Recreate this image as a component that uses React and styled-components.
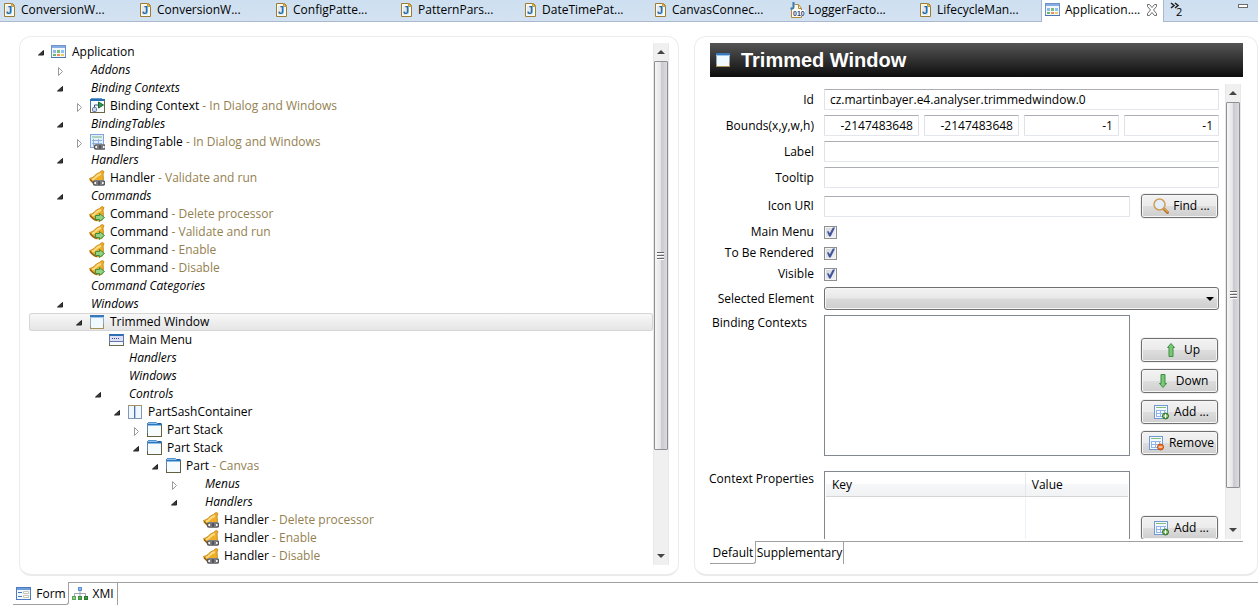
import React from 'react';
import styled, { createGlobalStyle, css } from 'styled-components';

const GlobalStyle = createGlobalStyle`
  *, *::before, *::after { box-sizing: border-box; }
  body {
    margin: 0;
    background: #fff;
    color: #000;
    font-family: "Open Sans", "Noto Sans", sans-serif;
    font-size: 12px;
    line-height: 16px;
  }
  button, input, select { font: inherit; color: inherit; margin: 0; }
`;

/* ---------- icons ---------- */

const Glyph = styled.svg.attrs((p) => ({ viewBox: p.viewBox || '0 0 16 16', 'aria-hidden': true }))`
  display: block;
  flex: none;
  width: 16px;
  height: 16px;
`;

const GlyphLetter = styled.text`
  font-family: "Liberation Sans", sans-serif;
  font-weight: bold;
  font-size: ${(p) => (p.$small ? 7 : 11)}px;
  fill: ${(p) => (p.$small ? '#26406f' : '#2468a4')};
`;

const JavaIcon = () => (
  <Glyph>
    <path d="M2.500 1.500h8l2 2v11h-10z" fill="#fdf9ec" stroke="#9c7d35" />
    <path d="M9.500 1.500v3h3z" fill="#f1c45a" stroke="#c59a3c" />
    <rect x="4" y="4" width="6" height="9" fill="#dcebf7" />
    <GlyphLetter x="4" y="12">J</GlyphLetter>
  </Glyph>
);

const ClassIcon = () => (
  <Glyph>
    <path d="M2.500 5.500v10h10v-9l-3-4h-4" fill="#fdf9ec" stroke="#b08a3c" />
    <path d="M9.500 3v3.500h3" fill="none" stroke="#b08a3c" />
    <path d="M4.500 0v5q0 2-3 1.500" fill="none" stroke="#3b78b0" strokeWidth="2" />
    <rect x="3" y="8" width="13" height="6" fill="#fff" />
    <GlyphLetter $small x="4" y="14">010</GlyphLetter>
  </Glyph>
);

const AppIcon = () => (
  <Glyph>
    <rect x="0.500" y="1.500" width="14" height="12" fill="#f3f8fe" stroke="#6f91c6" />
    <rect x="1" y="2" width="13" height="2" fill="#86aee2" />
    <path d="M0 13.500h15" stroke="#4e74ad" />
    <path d="M2 6h3v3H2z" fill="#8dbbe8" />
    <path d="M6 6h3v3H6z" fill="#7cbb78" />
    <path d="M10 6h3v3h-3z" fill="#8fc3ef" />
    <path d="M2 10h3v2H2z" fill="#6fb56d" />
    <path d="M6 10h3v2H6z" fill="#ee8d55" />
    <path d="M10 10h3v2h-3z" fill="#efce5c" />
  </Glyph>
);

const ContextIcon = () => (
  <Glyph viewBox="-1 0 16 16">
    <rect x="0.500" y="1.500" width="14" height="13" fill="#f7fbfe" stroke="#6b6546" />
    <path d="M1 0.500h11" stroke="#5b9bd4" />
    <path d="M0 2h15" stroke="#2870b2" strokeWidth="2" />
    <path d="M0.500 3v6" stroke="#3c78b4" />
    <path d="M8.500 4l5 3-5 3z" fill="#2f9a50" stroke="#176a38" />
    <path d="M4.500 9v-2h4" fill="none" stroke="#3a4d80" />
    <rect x="2.500" y="9.500" width="4" height="4" rx="1" fill="#c9d5ec" stroke="#6478a4" />
  </Glyph>
);

const Chain = () => (
  <g fill="none">
    <rect x="4" y="10" width="12" height="6" rx="3" fill="#f4f4f4" />
    <g stroke="#54565b" strokeWidth="1.500">
      <rect x="4.500" y="11" width="6" height="4" rx="1.500" />
      <rect x="9.500" y="11" width="6" height="4" rx="1.500" />
      <path d="M7 13h6" />
    </g>
  </g>
);

const BindingTableIcon = () => (
  <Glyph viewBox="-1 0 16 16">
    <rect x="0.500" y="0.500" width="13" height="13" fill="#e4effc" stroke="#7fa5da" />
    <path d="M2 3h10" stroke="#79b877" />
    <path d="M2 6.500h10M2 9.500h10M3.500 5v7M8.500 5v7" stroke="#8db0df" />
    <Chain />
  </Glyph>
);

const Bell = () => (
  <g>
    <path
      d="M10.500 2.500L13 0.500 15 1.500 14 4Q15 9 13.500 14 10 15.500 6 14.500 2 12.500 0.500 8.500 3 8 5 6.500 7 3.500 10.500 2.500z"
      fill="#efad28"
      stroke="#cd8f22"
    />
    <path d="M12 4Q9 4.500 7 7 5 9.500 3 9.500" fill="none" stroke="#fbdc82" strokeWidth="2" />
    <path d="M1 9.500q3 4 7 5" fill="none" stroke="#996312" strokeWidth="1.500" />
  </g>
);

const HandlerIcon = () => (
  <Glyph>
    <Bell />
    <Chain />
  </Glyph>
);

const CommandIcon = () => (
  <Glyph>
    <Bell />
    <path d="M6.500 9.500h4v-2l5 4-5 4v-2h-4z" fill="#93d184" stroke="#3c9140" />
  </Glyph>
);

const WindowIcon = () => (
  <Glyph>
    <rect x="1.500" y="1.500" width="13" height="13" fill="#f0f9fe" stroke="#a5905c" />
    <path d="M1 2h14" stroke="#3a78ba" strokeWidth="2" />
    <path d="M1 3.500h14" stroke="#9cc6ea" />
    <path d="M1.500 4v8M14.500 4v6" stroke="#8fa9bd" />
  </Glyph>
);

const MenuIcon = () => (
  <Glyph viewBox="-1 0 16 16">
    <rect x="0.500" y="2.500" width="14" height="11" fill="#f5fafe" stroke="#6c6a4c" />
    <rect x="0" y="2" width="15" height="2" fill="#2f6fb3" />
    <rect x="1" y="4" width="13" height="5" fill="#dcdff5" />
    <path d="M0.500 3v8M14.500 3v8M1 9.500h13" stroke="#6478a8" />
    <path d="M3 6.500h8" stroke="#344c86" strokeDasharray="1 1" />
  </Glyph>
);

const SashIcon = () => (
  <Glyph>
    <rect x="1.500" y="1.500" width="13" height="13" fill="#f0f7fe" stroke="#8497b5" />
    <path d="M1 1.500h14" stroke="#a8925c" />
    <path d="M7.500 2v12" stroke="#4f71ad" />
    <path d="M8.500 2v12" stroke="#b6cbe8" />
  </Glyph>
);

const StackIcon = () => (
  <Glyph viewBox="-1 0 16 16">
    <rect x="0.500" y="2.500" width="14" height="12" fill="#f6fbfe" stroke="#655f41" />
    <path d="M1 0.500h8" stroke="#4f93cf" />
    <path d="M0 1.500h10" stroke="#8cc0ea" />
    <path d="M9.500 0.500l1 1h4" fill="none" stroke="#1f5c9c" />
    <path d="M0 2.500h15" stroke="#2c74bb" />
    <path d="M1 3.500h13" stroke="#8cc0ea" />
    <path d="M0.500 1v10" stroke="#5a83ad" />
  </Glyph>
);

const SearchIcon = () => (
  <Glyph>
    <path d="M10.500 10.500l4 4" stroke="#b9742c" strokeWidth="3" strokeLinecap="round" />
    <path d="M11 10.500l3.500 3.500" stroke="#f3c76a" strokeLinecap="round" />
    <circle cx="6.500" cy="6.500" r="5.500" fill="#e4eef9" stroke="#d0a05a" strokeWidth="1.500" />
  </Glyph>
);

const UpIcon = () => (
  <Glyph>
    <path d="M6 14.500v-9H4.500L8 1.500l3.500 4H10v9z" fill="#7cc777" stroke="#3d8f43" />
  </Glyph>
);

const DownIcon = () => (
  <Glyph>
    <path d="M6 1.500v9H4.500L8 14.500l3.500-4H10v-9z" fill="#7cc777" stroke="#3d8f43" />
  </Glyph>
);

const TableBase = () => (
  <g>
    <rect x="0.500" y="1.500" width="13" height="13" fill="#f4f9ff" stroke="#7099d4" />
    <path d="M2 3.500h10" stroke="#84bd78" />
    <path d="M2 6.500h10M2 9.500h10M2 12.500h10M2.500 6v7M6.500 6v7M10.500 6v7" stroke="#93b4e2" />
  </g>
);

const AddIcon = () => (
  <Glyph>
    <TableBase />
    <circle cx="11.500" cy="12" r="3" fill="#5fa548" stroke="#34762a" />
    <path d="M9.500 12h4M11.500 10v4" stroke="#fff" />
  </Glyph>
);

const RemoveIcon = () => (
  <Glyph>
    <TableBase />
    <circle cx="11.500" cy="12" r="3" fill="#ee7128" stroke="#c4500f" />
    <path d="M9.500 12h4" stroke="#fff" />
  </Glyph>
);

const FormIcon = () => (
  <Glyph>
    <rect x="0.500" y="1.500" width="14" height="12" fill="#f3f8fe" stroke="#4c7cbf" />
    <rect x="1" y="2" width="13" height="2" fill="#6d9cdb" />
    <path d="M2 6.500h4M2 10.500h4" stroke="#4a78b5" />
    <path d="M7.500 5.500h5v2h-5zM7.500 9.500h5v2h-5z" fill="#fff" stroke="#c9c5b2" />
  </Glyph>
);

const TreeIcon = () => (
  <Glyph>
    <path d="M8 5v3M2.500 10V7.500h11V10M8 8v2" fill="none" stroke="#9aa3b0" />
    <rect x="6.500" y="1.500" width="3" height="3" fill="#8ab6ee" stroke="#5d91d6" />
    <rect x="0.500" y="10.500" width="3" height="3" fill="#8ccf7c" stroke="#56a656" />
    <rect x="6.500" y="10.500" width="3" height="3" fill="#5fb055" stroke="#3b8f3f" />
    <rect x="12.500" y="10.500" width="3" height="3" fill="#3f9a43" stroke="#257a2e" />
  </Glyph>
);

const CloseIcon = () => (
  <Glyph>
    <path
      d="M2.500 2.500h2l2.500 3 2.500-3h2v2l-3 3.500 3 3.500v2h-2l-2.500-3-2.500 3h-2v-2l3-3.500-3-3.500z"
      fill="#fff"
      stroke="#6b6b6b"
    />
  </Glyph>
);

const ChevronIcon = () => (
  <Glyph>
    <path d="M3 3l3 2.500L3 8M7 3l3 2.500L7 8" fill="none" stroke="#1d1d1d" strokeWidth="1.500" />
  </Glyph>
);

const MinimizeIcon = () => (
  <Glyph>
    <rect x="3.500" y="4.500" width="9" height="3" fill="#fff" stroke="#6b6b6b" />
  </Glyph>
);

const TwistieIcon = ({ open }) => (
  <Glyph>
    {open ? (
      <path d="M11.500 6.500v4.500h-5z" fill="#3c3c3c" stroke="#222" />
    ) : (
      <path d="M7.500 5.500l4 4-4 4z" fill="#fff" stroke="#9a9a9a" />
    )}
  </Glyph>
);

/* ---------- editor tabs ---------- */

const TabBar = styled.nav`
  display: flex;
  height: 22px;
  overflow: hidden;
  background: linear-gradient(#cddff0, #d4e2f1);
`;

const EditorTab = styled.button`
  display: flex;
  align-items: center;
  gap: 3px;
  flex: 0 0 ${(p) => p.$width}px;
  height: 22px;
  padding: 0 2px 1px;
  border: 0;
  border-bottom: 1px solid #a9b8cf;
  background: none;
  white-space: nowrap;
  ${(p) =>
    p.$active &&
    css`
      gap: 4px;
      padding: 0 2px 2px 3px;
      border: 1px solid #a9b8cf;
      border-width: 0 1px;
      background: #fff;
    `}
`;

const TabText = styled.span`
  flex: 1;
  text-align: left;
`;

const TabBarRest = styled.div`
  display: flex;
  flex: 1;
  justify-content: space-between;
  padding: 0 7px 0 4px;
  border-bottom: 1px solid #a9b8cf;
`;

const BarButton = styled.button`
  display: flex;
  align-items: center;
  height: 16px;
  padding: 0;
  border: 0;
  background: none;
`;

const HiddenCount = styled.span`
  margin-left: -8px;
  padding-top: 8px;
  font-size: 11px;
`;

/* ---------- scroll bar ---------- */

const ScrollTrack = styled.div`
  display: flex;
  flex-direction: column;
  flex: 0 0 16px;
  border: 1px solid #e8e8e8;
  border-width: 0 1px;
  background: #f0f0f0;
`;

const ScrollButton = styled.button`
  display: flex;
  align-items: center;
  justify-content: center;
  flex: 0 0 18px;
  padding: 0;
  border: 0;
  background: none;

  &::before {
    content: "";
    border: 4px solid transparent;
    border-top-width: ${(p) => (p.$down ? 4 : 0)}px;
    border-bottom-width: ${(p) => (p.$down ? 0 : 4)}px;
    border-top-color: #444;
    border-bottom-color: #444;
  }
`;

const ScrollThumb = styled.div`
  display: flex;
  align-items: center;
  justify-content: center;
  flex: ${(p) => p.$share} 1 0;
  border: 1px solid #8f8f93;
  border-radius: 1px;
  background: linear-gradient(90deg, #f6f6f6, #e6e6e8 45%, #c9c9cf 55%, #dcdce0);

  &::before {
    content: "";
    width: 7px;
    height: 8px;
    background: repeating-linear-gradient(#66666a 0 1px, #fff 1px 2px, transparent 2px 3px);
  }
`;

const ScrollRest = styled.div`
  flex: ${(p) => p.$share} 1 0;
`;

const ScrollBar = ({ thumb }) => (
  <ScrollTrack>
    <ScrollButton aria-label="Scroll up" />
    <ScrollThumb $share={thumb} />
    <ScrollRest $share={100 - thumb} />
    <ScrollButton $down aria-label="Scroll down" />
  </ScrollTrack>
);

/* ---------- panels ---------- */

const Page = styled.div`
  display: flex;
  flex-direction: column;
  min-height: 100vh;
`;

const Workspace = styled.main`
  display: grid;
  grid-template-columns: minmax(0, 1.170fr) minmax(0, 1fr);
  gap: 15px;
  padding: 14px 0 6px 19px;
`;

const Panel = styled.section`
  display: flex;
  min-width: 0;
  border: 1px solid #ececec;
  border-bottom: 2px solid #ebebeb;
  border-radius: 12px;
  background: #fff;
`;

const TreePanel = styled(Panel)`
  padding: 6px 9px 9px;
`;

const DetailPanel = styled(Panel)`
  flex-direction: column;
  padding: 6px 14px 9px 15px;
`;

const Tree = styled.ul`
  flex: 1;
  min-width: 0;
  margin: 0;
  padding: 0;
  list-style: none;
`;

const TreeRow = styled.li`
  display: flex;
  align-items: center;
  height: 18px;
  padding-left: ${(p) => p.$level * 19 + 3}px;
  white-space: nowrap;
  ${(p) =>
    p.$selected &&
    css`
      border-radius: 3px;
      background: linear-gradient(#f9f9f9, #e4e4e4);
      box-shadow: inset 0 0 0 1px #d6d6d6;
    `}
`;

const Slot = styled.span`
  flex: 0 0 ${(p) => p.$width}px;
`;

const NodeName = styled.span`
  font-style: ${(p) => (p.$group ? 'italic' : 'normal')};
`;

const NodeDetail = styled.span`
  color: #947f50;
  white-space: pre;
`;

/* ---------- form ---------- */

const TitleBar = styled.header`
  display: flex;
  align-items: center;
  gap: 10px;
  height: 34px;
  margin-bottom: 7px;
  padding: 0 5px;
  background: linear-gradient(#555, #0d0d0d);
`;

const Title = styled.h1`
  margin: 0;
  color: #fff;
  font: bold 20px/24px "Liberation Sans", sans-serif;
`;

const FormViewport = styled.div`
  display: flex;
  flex: 1 1 0;
  gap: 6px;
  min-height: 0;
  margin: 0 2px 2px -4px;
  overflow: hidden;
`;

const FormGrid = styled.form`
  display: grid;
  flex: 1;
  grid-template-columns: 108px minmax(0, 1fr) 79px;
  column-gap: 10px;
  row-gap: 5px;
  align-content: start;
  align-items: center;
  min-width: 0;
  padding-top: 5px;
`;

const FieldLabel = styled.label`
  align-self: ${(p) => (p.$top ? 'start' : 'center')};
  justify-self: end;
  padding-right: ${(p) => (p.$inset ? 7 : 0)}px;
  white-space: nowrap;
`;

const TextField = styled.input`
  grid-column: span ${(p) => p.$span || 1};
  width: 100%;
  min-width: 0;
  height: 21px;
  padding: 0 5px;
  border: 1px solid;
  border-color: #abadb3 #e0e3ea #e3e6ec #dfe2ea;
  border-radius: 1px;
  background: #fff;
  text-align: ${(p) => (p.$number ? 'right' : 'left')};
  outline: 0;
`;

const BoundsGroup = styled.div`
  display: grid;
  grid-column: span 2;
  grid-template-columns: repeat(4, minmax(0, 1fr));
  gap: 5px;
`;

const CheckCell = styled.div`
  display: flex;
  align-items: center;
  grid-column: span 2;
  height: 16px;
`;

const CheckBox = styled.input.attrs({ type: 'checkbox' })`
  appearance: none;
  width: 13px;
  height: 13px;
  border: 1px solid #8e8f8f;
  background: linear-gradient(135deg, #cfd3da, #f4f5f7);
  box-shadow: inset 0 0 0 1px #f4f4f4;

  &:checked::before {
    content: "";
    display: block;
    width: 11px;
    height: 11px;
    background: #41549c;
    clip-path: polygon(18% 46%, 34% 44%, 44% 62%, 72% 8%, 92% 8%, 52% 92%, 38% 92%);
  }
`;

const Combo = styled.div`
  position: relative;
  grid-column: span 2;
  height: 23px;
`;

const ComboSelect = styled.select`
  display: block;
  appearance: none;
  width: 100%;
  height: 23px;
  padding: 0 20px 0 5px;
  border: 1px solid #707070;
  border-radius: 3px;
  background: linear-gradient(#f3f3f3, #e8e8e8 48%, #dadada 52%, #cdcdcd);
  box-shadow: inset 0 0 0 1px #f6f6f6;
`;

const ComboArrow = styled.span`
  position: absolute;
  top: 10px;
  right: 5px;
  border: 4px solid transparent;
  border-top-color: #000;
  border-bottom: 0;
  pointer-events: none;
`;

const PushButton = styled.button.attrs({ type: 'button' })`
  display: flex;
  align-items: center;
  justify-content: center;
  gap: ${(p) => (p.$wide ? 5 : 4)}px;
  width: 100%;
  height: 26px;
  padding: 0 0 0 4px;
  border: 1px solid #f0f0f0;
  border-radius: 4px;
  background: linear-gradient(#f3f3f3, #ebebeb 48%, #dddddd 52%, #cdcdcd);
  box-shadow: inset 0 0 0 1px #707070, inset 0 0 0 2px #f6f6f6;
  white-space: nowrap;
`;

const ButtonColumn = styled.div`
  display: flex;
  flex-direction: column;
  justify-content: flex-end;
  align-self: stretch;
  gap: 5px;
  margin-bottom: ${(p) => (p.$spaced ? 10 : 0)}px;
`;

const ListBox = styled.div`
  height: 141px;
  margin-bottom: 10px;
  border: 1px solid #828790;
`;

const TableBox = styled.div`
  height: 70px;
  border: 1px solid #828790;
  border-bottom: 0;
  padding: 1px 1px 0;
`;

const PropertyTable = styled.table`
  width: 100%;
  height: 100%;
  border-collapse: collapse;
  table-layout: fixed;
`;

const HeadCell = styled.th`
  width: ${(p) => p.$width};
  height: 23px;
  padding: 1px 6px 0;
  border-right: 1px solid #e3e8ee;
  border-bottom: 1px solid #d5d5d5;
  background: linear-gradient(#fff 45%, #f6f7f8 50%, #f1f2f4);
  font-weight: normal;
  text-align: left;
  &:last-child { border-right: 0; }
`;

const BodyCell = styled.td`
  padding: 0;
  border-right: 1px solid #edf3f8;
  &:last-child { border-right: 0; }
`;

/* ---------- bottom tab strips ---------- */

const Strip = styled.nav`
  display: flex;
  flex: none;
  height: 24px;
  padding-left: ${(p) => p.$indent || 0}px;
`;

const StripTab = styled.button`
  display: flex;
  align-items: center;
  justify-content: center;
  gap: 4px;
  flex: 0 0 ${(p) => p.$width}px;
  height: 23px;
  padding: ${(p) => (p.$active ? '1px 0 0 1px' : 0)};
  border: 0 solid #a0a0a0;
  border-width: ${(p) => (p.$active ? '0 1px 1px 0' : '1px 1px 0 0')};
  border-bottom-right-radius: ${(p) => (p.$active ? 3 : 0)}px;
  background: #fff;
  white-space: nowrap;
`;

const StripLine = styled.div`
  flex: 1;
  border-top: 1px solid #a0a0a0;
`;

/* ---------- data ---------- */

const editorTabs = [
  { text: 'ConversionW...', width: 136 },
  { text: 'ConversionW...', width: 136 },
  { text: 'ConfigPatte...', width: 125 },
  { text: 'PatternPars...', width: 124 },
  { text: 'DateTimePat...', width: 130 },
  { text: 'CanvasConnec...', width: 136 },
  { text: 'LoggerFacto...', width: 129, Icon: ClassIcon },
  { text: 'LifecycleMan...', width: 125 },
];

const nodes = [
  { level: 0, open: true, Icon: AppIcon, name: 'Application' },
  { level: 1, open: false, group: true, name: 'Addons' },
  { level: 1, open: true, group: true, name: 'Binding Contexts' },
  { level: 2, open: false, Icon: ContextIcon, name: 'Binding Context', detail: 'In Dialog and Windows' },
  { level: 1, open: true, group: true, name: 'BindingTables' },
  { level: 2, open: false, Icon: BindingTableIcon, name: 'BindingTable', detail: 'In Dialog and Windows' },
  { level: 1, open: true, group: true, name: 'Handlers' },
  { level: 2, Icon: HandlerIcon, name: 'Handler', detail: 'Validate and run' },
  { level: 1, open: true, group: true, name: 'Commands' },
  { level: 2, Icon: CommandIcon, name: 'Command', detail: 'Delete processor' },
  { level: 2, Icon: CommandIcon, name: 'Command', detail: 'Validate and run' },
  { level: 2, Icon: CommandIcon, name: 'Command', detail: 'Enable' },
  { level: 2, Icon: CommandIcon, name: 'Command', detail: 'Disable' },
  { level: 1, group: true, name: 'Command Categories' },
  { level: 1, open: true, group: true, name: 'Windows' },
  { level: 2, open: true, Icon: WindowIcon, name: 'Trimmed Window', selected: true },
  { level: 3, Icon: MenuIcon, name: 'Main Menu' },
  { level: 3, group: true, name: 'Handlers' },
  { level: 3, group: true, name: 'Windows' },
  { level: 3, open: true, group: true, name: 'Controls' },
  { level: 4, open: true, Icon: SashIcon, name: 'PartSashContainer' },
  { level: 5, open: false, Icon: StackIcon, name: 'Part Stack' },
  { level: 5, open: true, Icon: StackIcon, name: 'Part Stack' },
  { level: 6, open: true, Icon: StackIcon, name: 'Part', detail: 'Canvas' },
  { level: 7, open: false, group: true, name: 'Menus' },
  { level: 7, open: true, group: true, name: 'Handlers' },
  { level: 8, Icon: HandlerIcon, name: 'Handler', detail: 'Delete processor' },
  { level: 8, Icon: HandlerIcon, name: 'Handler', detail: 'Enable' },
  { level: 8, Icon: HandlerIcon, name: 'Handler', detail: 'Disable' },
];

const checks = [
  { id: 'main-menu', text: 'Main Menu' },
  { id: 'rendered', text: 'To Be Rendered' },
  { id: 'visible', text: 'Visible' },
];

const bounds = [
  { name: 'x', value: '-2147483648' },
  { name: 'y', value: '-2147483648' },
  { name: 'width', value: '-1' },
  { name: 'height', value: '-1' },
];

function TreeNode({ node }) {
  const { level, open, Icon, name, detail, group, selected } = node;
  return (
    <TreeRow role="treeitem" aria-level={level + 1} aria-expanded={open} aria-selected={!!selected} $level={level} $selected={selected}>
      <Slot $width={19}>{open !== undefined && <TwistieIcon open={open} />}</Slot>
      <Slot $width={21}>{Icon && <Icon />}</Slot>
      <NodeName $group={group}>{name}</NodeName>
      {detail && <NodeDetail>{` - ${detail}`}</NodeDetail>}
    </TreeRow>
  );
}

export default function App() {
  return (
    <Page>
      <GlobalStyle />
      <TabBar>
        {editorTabs.map(({ text, width, Icon = JavaIcon }, i) => (
          <EditorTab key={i} $width={width}>
            <Icon />
            <TabText>{text}</TabText>
          </EditorTab>
        ))}
        <EditorTab $width={123} $active>
          <AppIcon />
          <TabText>Application....</TabText>
          <CloseIcon />
        </EditorTab>
        <TabBarRest>
          <BarButton aria-label="Show hidden editors">
            <ChevronIcon />
            <HiddenCount>2</HiddenCount>
          </BarButton>
          <BarButton aria-label="Minimize">
            <MinimizeIcon />
          </BarButton>
        </TabBarRest>
      </TabBar>

      <Workspace>
        <TreePanel>
          <Tree role="tree">
            {nodes.map((node, i) => (
              <TreeNode key={i} node={node} />
            ))}
          </Tree>
          <ScrollBar thumb={80} />
        </TreePanel>

        <DetailPanel>
          <TitleBar>
            <WindowIcon />
            <Title>Trimmed Window</Title>
          </TitleBar>
          <FormViewport>
            <FormGrid>
              <FieldLabel htmlFor="id">Id</FieldLabel>
              <TextField id="id" $span={2} defaultValue="cz.martinbayer.e4.analyser.trimmedwindow.0" />

              <FieldLabel htmlFor="bounds-x">Bounds(x,y,w,h)</FieldLabel>
              <BoundsGroup>
                {bounds.map(({ name, value }) => (
                  <TextField key={name} id={`bounds-${name}`} aria-label={name} $number defaultValue={value} />
                ))}
              </BoundsGroup>

              <FieldLabel htmlFor="label">Label</FieldLabel>
              <TextField id="label" $span={2} />

              <FieldLabel htmlFor="tooltip">Tooltip</FieldLabel>
              <TextField id="tooltip" $span={2} />

              <FieldLabel htmlFor="icon-uri">Icon URI</FieldLabel>
              <TextField id="icon-uri" />
              <PushButton>
                <SearchIcon />
                Find ...
              </PushButton>

              {checks.map(({ id, text }) => (
                <React.Fragment key={id}>
                  <FieldLabel htmlFor={id}>{text}</FieldLabel>
                  <CheckCell>
                    <CheckBox id={id} defaultChecked />
                  </CheckCell>
                </React.Fragment>
              ))}

              <FieldLabel htmlFor="selected-element">Selected Element</FieldLabel>
              <Combo>
                <ComboSelect id="selected-element" />
                <ComboArrow />
              </Combo>

              <FieldLabel as="span" id="contexts-label" $top $inset>Binding Contexts</FieldLabel>
              <ListBox role="listbox" aria-labelledby="contexts-label" />
              <ButtonColumn $spaced>
                <PushButton $wide><UpIcon />Up</PushButton>
                <PushButton $wide><DownIcon />Down</PushButton>
                <PushButton><AddIcon />Add ...</PushButton>
                <PushButton><RemoveIcon />Remove</PushButton>
              </ButtonColumn>

              <FieldLabel as="span" id="properties-label" $top>Context Properties</FieldLabel>
              <TableBox>
                <PropertyTable aria-labelledby="properties-label">
                  <thead>
                    <tr>
                      <HeadCell $width="66%">Key</HeadCell>
                      <HeadCell>Value</HeadCell>
                    </tr>
                  </thead>
                  <tbody>
                    <tr>
                      <BodyCell />
                      <BodyCell />
                    </tr>
                  </tbody>
                </PropertyTable>
              </TableBox>
              <ButtonColumn>
                <PushButton><AddIcon />Add ...</PushButton>
              </ButtonColumn>
            </FormGrid>
            <ScrollBar thumb={92} />
          </FormViewport>
          <Strip>
            <StripTab $active $width={46}>Default</StripTab>
            <StripTab $width={88}>Supplementary</StripTab>
            <StripLine />
          </Strip>
        </DetailPanel>
      </Workspace>

      <Strip $indent={13}>
        <StripTab $active $width={56}><FormIcon />Form</StripTab>
        <StripTab $width={49}><TreeIcon />XMI</StripTab>
        <StripLine />
      </Strip>
    </Page>
  );
}
